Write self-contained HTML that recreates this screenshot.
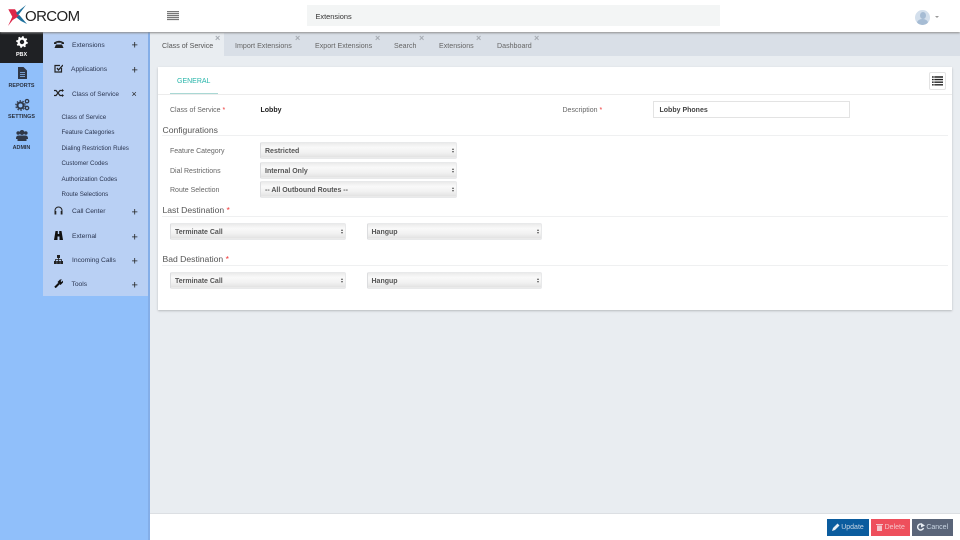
<!DOCTYPE html>
<html><head><meta charset="utf-8">
<style>
*{box-sizing:border-box}
html,body{margin:0;padding:0;width:960px;height:540px;overflow:hidden;background:#e9edf1;font-family:"Liberation Sans",sans-serif;}
.a{position:absolute}
.t{position:absolute;white-space:nowrap;font-size:7px;line-height:10px;color:#333;transform:translateY(1px)}
.n{transform:none}
.m{font-size:6.700px;color:#2a3550}
.s{font-size:6.200px;color:#2a3550}
.p{font-size:11px;color:#222;transform:translate(.5px,1.500px)}
.l{color:#666;font-size:7px}
.h{font-size:8.600px;color:#555;line-height:12px;transform:none}
.b{font-weight:bold}
.r{color:#e33}
.rl{left:0;width:43px;text-align:center;font-size:5.400px;font-weight:bold;color:#2a3240;transform:none}
.tb{color:#666;font-size:7.100px}
.sel{position:absolute;height:17px;border-radius:2px;border:1px solid #e8e9ea;border-left:1px solid #dcdddf;background:linear-gradient(#ebebeb,#f9f9f9 30%,#f1f1f1 65%,#e3e3e3 92%,#efefef);font:bold 7px/17px "Liberation Sans",sans-serif;color:#555;padding-left:4px}
.sel:before,.sel:after{content:"";position:absolute;right:2.500px;border-left:1.500px solid transparent;border-right:1.500px solid transparent}
.sel:before{top:4.500px;border-bottom:2.500px solid #555}
.sel:after{top:8px;border-top:2.500px solid #555}
.line{position:absolute;height:1px;background:#eff0f1}
.x{position:absolute;font:bold 9px/7px "Liberation Sans",sans-serif;color:#a6abb2}
.btn{position:absolute;top:519px;height:17px;color:#c9d6e4;font:7px/17px "Liberation Sans",sans-serif;text-align:center}
</style></head><body>
<!-- top bar -->
<div class="a" style="left:0;top:0;width:960px;height:32px;background:#fff;box-shadow:0 1px 2px #888;z-index:5">
<svg class="a" style="left:0;top:0" width="30" height="30" viewBox="0 0 30 30">
<path d="M8.300 9.300H15L19.300 16L12.700 20L8 26L12.300 16.700Z" fill="#dc2549"/>
<path d="M26 5L16 13L18 15.500Z" fill="#1c6f9c"/>
<path d="M19.300 15L27 24L21 21L16.500 17.500Z" fill="#1c6f9c"/>
</svg>
<span class="t n" style="left:25px;top:8px;font-size:15px;line-height:17px;color:#222;letter-spacing:-.6px">ORCOM</span>
<svg class="a" style="left:167px;top:11px" width="12" height="10"><path d="M0 .5H12M0 2.500H12M0 4.500H12M0 6.500H12M0 8.500H12" stroke="#777" stroke-width="1.200" /></svg>
<div class="a" style="left:307px;top:5px;width:413px;height:21px;background:#f3f5f5"></div>
<span class="t" style="left:315.500px;top:11px;color:#333;font-size:7.400px">Extensions</span>
<div class="a" style="left:915px;top:10px;width:15px;height:15px;border-radius:50%;background:#d3dfec;overflow:hidden">
<div class="a" style="left:4.500px;top:2px;width:6px;height:7px;border-radius:50%;background:#a6bcd4"></div>
<div class="a" style="left:2px;top:9px;width:11px;height:8px;border-radius:50%;background:#a6bcd4"></div></div>
<div class="a" style="left:935px;top:16px;border:2px solid transparent;border-top:2px solid #999"></div>
</div>
<!-- rail -->
<div class="a" style="left:0;top:32px;width:150px;height:508px;background:#90bffa"></div>
<div class="a" style="left:148px;top:32px;width:2px;height:508px;background:#84aee8"></div>
<div class="a" style="left:0;top:32px;width:43px;height:31px;background:#1f2124"></div>
<svg class="a" style="left:16px;top:36px" width="12" height="12" viewBox="0 0 12 12"><circle cx="6" cy="6" r="3.400" fill="none" stroke="#fff" stroke-width="2.400"/><circle cx="6" cy="6" r="5" fill="none" stroke="#fff" stroke-width="1.500" stroke-dasharray="1.900 2"/></svg>
<span class="t rl" style="top:50px;color:#fff">PBX</span>
<svg class="a" style="left:18px;top:67px" width="9" height="12" viewBox="0 0 9 12"><path d="M0 0H5.500L9 3.500V12H0Z" fill="#2f3848"/><path d="M2 5.500H7M2 7.500H7M2 9.500H7" stroke="#90bffa" stroke-width=".7"/></svg>
<span class="t rl" style="top:81px">REPORTS</span>
<svg class="a" style="left:15px;top:98px" width="15" height="14" viewBox="0 0 15 14"><circle cx="5.500" cy="7.500" r="3" fill="none" stroke="#2f3848" stroke-width="2"/><circle cx="5.500" cy="7.500" r="4.700" fill="none" stroke="#2f3848" stroke-width="1.200" stroke-dasharray="1.500 1.500"/><circle cx="12" cy="3.200" r="1.700" fill="none" stroke="#2f3848" stroke-width="1.300"/><circle cx="12" cy="10" r="1.700" fill="none" stroke="#2f3848" stroke-width="1.300"/></svg>
<span class="t rl" style="top:112px">SETTINGS</span>
<svg class="a" style="left:16px;top:130px" width="12" height="11" viewBox="0 0 12 11"><circle cx="2.200" cy="3" r="1.800" fill="#2f3848"/><circle cx="9.800" cy="3" r="1.800" fill="#2f3848"/><circle cx="6" cy="2.500" r="2.500" fill="#2f3848"/><path d="M0 8.500Q0 5.500 2.500 5.500H9.500Q12 5.500 12 8.500V9H10.500V11H1.500V9H0Z" fill="#2f3848"/></svg>
<span class="t rl" style="top:143px">ADMIN</span>
<!-- submenu -->
<div class="a" style="left:43px;top:32px;width:105px;height:264px;background:#b9d0f4"></div>
<svg class="a" style="left:54px;top:40px" width="10" height="8" viewBox="0 0 10 8"><path d="M0 2.500Q5 -1 10 2.500V4H7.500V2.800H2.500V4H0Z M2 4.500H8L9.500 8H.5Z" fill="#222"/></svg>
<span class="t m" style="left:72px;top:40px">Extensions</span><span class="t p" style="left:131px;top:39px">+</span>
<svg class="a" style="left:54px;top:64px" width="9" height="9" viewBox="0 0 9 9"><path d="M6 1.500H1V8H7.500V4" fill="none" stroke="#222" stroke-width="1.200"/><path d="M3 4L4.500 6L9 1" fill="none" stroke="#222" stroke-width="1.300"/></svg>
<span class="t m" style="left:71px;top:64px">Applications</span><span class="t p" style="left:131px;top:64px">+</span>
<svg class="a" style="left:54px;top:89px" width="10" height="8" viewBox="0 0 10 8"><path d="M0 1.500H2L6 6.500H9M0 6.500H2L6 1.500H9" fill="none" stroke="#222" stroke-width="1.200"/><path d="M8 0L10 1.500L8 3ZM8 5L10 6.500L8 8Z" fill="#222"/></svg>
<span class="t m" style="left:72px;top:89px;font-size:6.500px">Class of Service</span><span class="t" style="left:131.500px;top:88px;font-size:9px;color:#222">×</span>
<span class="t s" style="left:61.500px;top:112px">Class of Service</span>
<span class="t s" style="left:61.500px;top:127px">Feature Categories</span>
<span class="t s" style="left:61.500px;top:143px">Dialing Restriction Rules</span>
<span class="t s" style="left:61.500px;top:158px">Customer Codes</span>
<span class="t s" style="left:61.500px;top:174px">Authorization Codes</span>
<span class="t s" style="left:61.500px;top:189px">Route Selections</span>
<svg class="a" style="left:54px;top:206px" width="9" height="9" viewBox="0 0 9 9"><path d="M1 6.500V4.500A3.500 3.500 0 0 1 8 4.500V6.500" fill="none" stroke="#222" stroke-width="1"/><rect x=".5" y="5" width="1.800" height="3.500" fill="#222"/><rect x="6.700" y="5" width="1.800" height="3.500" fill="#222"/></svg>
<span class="t m" style="left:72px;top:206px">Call Center</span><span class="t p" style="left:131px;top:206px">+</span>
<svg class="a" style="left:54px;top:231px" width="9" height="9" viewBox="0 0 9 9"><path d="M1.500 0H3.800V3H5.200V0H7.500L9 9H5.500V5.500H3.500V9H0Z" fill="#111"/></svg>
<span class="t m" style="left:72px;top:231px">External</span><span class="t p" style="left:131px;top:231px">+</span>
<svg class="a" style="left:54px;top:255px" width="9" height="9" viewBox="0 0 9 9"><rect x="3" y="0" width="3" height="3" fill="#222"/><path d="M1.500 6V4.500H7.500V6M4.500 3V6" fill="none" stroke="#222" stroke-width=".8"/><rect x="0" y="6" width="2.800" height="3" fill="#222"/><rect x="3.100" y="6" width="2.800" height="3" fill="#222"/><rect x="6.200" y="6" width="2.800" height="3" fill="#222"/></svg>
<span class="t m" style="left:72px;top:255px">Incoming Calls</span><span class="t p" style="left:131px;top:255px">+</span>
<svg class="a" style="left:54px;top:279px" width="9" height="9" viewBox="0 0 9 9"><path d="M1 8.500L5 4.500" stroke="#111" stroke-width="2"/><path d="M3.500 3L6 0.500H8L6.500 2L7.500 3L9 1.500V3.500L6.500 6Z" fill="#111"/></svg>
<span class="t m" style="left:71.500px;top:279px">Tools</span><span class="t p" style="left:131px;top:279px">+</span>
<!-- tabs -->
<div class="a" style="left:150px;top:33px;width:810px;height:23px;background:#d9dfe7"></div>
<div class="a" style="left:150px;top:33px;width:74px;height:23px;background:#e9edf1"></div>
<span class="t tb" style="left:162px;top:40px;color:#555">Class of Service</span><span class="x" style="left:215px;top:35px">×</span>
<span class="t tb" style="left:235px;top:40px">Import Extensions</span><span class="x" style="left:295px;top:35px">×</span>
<span class="t tb" style="left:315px;top:40px">Export Extensions</span><span class="x" style="left:375px;top:35px">×</span>
<span class="t tb" style="left:394px;top:40px">Search</span><span class="x" style="left:419px;top:35px">×</span>
<span class="t tb" style="left:439px;top:40px">Extensions</span><span class="x" style="left:476px;top:35px">×</span>
<span class="t tb" style="left:497px;top:40px">Dashboard</span><span class="x" style="left:534px;top:35px">×</span>
<!-- card -->
<div class="a" style="left:158px;top:67px;width:794px;height:243px;background:#fff;box-shadow:0 1px 2px #b5b9bd"></div>
<div class="a" style="left:158px;top:94px;width:794px;height:1px;background:#ececec"></div>
<div class="a" style="left:170px;top:93px;width:48px;height:1px;background:#a9d8d4"></div>
<span class="t" style="left:177px;top:76px;color:#27b5aa;font-size:7px">GENERAL</span>
<div class="a" style="left:929px;top:72px;width:17px;height:18px;border:1px solid #e3e3e3;border-radius:2px;background:#fff"></div>
<svg class="a" style="left:932px;top:76px" width="11" height="10"><path d="M0 1H11M0 3.600H11M0 6.200H11M0 8.800H11" stroke="#222" stroke-width="1.400"/><path d="M2 0V10" stroke="#fff" stroke-width=".6"/></svg>
<span class="t l" style="left:170px;top:105px">Class of Service <span class="r">*</span></span>
<span class="t b" style="left:260.500px;top:105px;color:#222">Lobby</span>
<span class="t l" style="left:562.500px;top:105px">Description <span class="r">*</span></span>
<div class="a" style="left:653px;top:101px;width:197px;height:17px;border:1px solid #e3e3e3;background:#fff"></div>
<span class="t b" style="left:659.500px;top:105px;color:#444">Lobby Phones</span>
<span class="t h" style="left:162.500px;top:124px">Configurations</span>
<div class="line" style="left:162px;top:135px;width:786px"></div>
<span class="t l" style="left:170px;top:146px">Feature Category</span>
<div class="sel" style="left:260px;top:142px;width:197px">Restricted</div>
<span class="t l" style="left:170px;top:166px">Dial Restrictions</span>
<div class="sel" style="left:260px;top:162px;width:197px">Internal Only</div>
<span class="t l" style="left:170px;top:185px">Route Selection</span>
<div class="sel" style="left:260px;top:181px;width:197px">-- All Outbound Routes --</div>
<span class="t h" style="left:162.500px;top:204px">Last Destination <span class="r">*</span></span>
<div class="line" style="left:162px;top:216px;width:786px"></div>
<div class="sel" style="left:170px;top:223px;width:176px">Terminate Call</div>
<div class="sel" style="left:366.500px;top:223px;width:175.500px">Hangup</div>
<span class="t h" style="left:162.500px;top:253px">Bad Destination <span class="r">*</span></span>
<div class="line" style="left:162px;top:265px;width:786px"></div>
<div class="sel" style="left:170px;top:272px;width:176px">Terminate Call</div>
<div class="sel" style="left:366.500px;top:272px;width:175.500px">Hangup</div>
<!-- footer -->
<div class="a" style="left:150px;top:513px;width:810px;height:27px;background:#fff;border-top:1px solid #dcdfe3"></div>
<div class="btn" style="left:827px;width:42px;background:#0b5c9e;padding-left:9px">Update</div>
<svg class="a" style="left:832px;top:523px" width="8" height="8"><path d="M0 8L1 5L5.500 .5L7.500 2.500L3 7Z" fill="#e8eef4"/></svg>
<div class="btn" style="left:870.500px;width:39.500px;background:#ee4f5c;padding-left:9px;color:#f4c6cb">Delete</div>
<svg class="a" style="left:876px;top:523px" width="7" height="8"><path d="M0 1H7V2H0ZM1 2.500H6V8H1Z" fill="#f4c6cb"/></svg>
<div class="btn" style="left:911.500px;width:41.500px;background:#5a6579;padding-left:10px">Cancel</div>
<svg class="a" style="left:917px;top:523px" width="8" height="8"><path d="M6.500 5A3 3 0 1 1 5 1.300" fill="none" stroke="#e8eef4" stroke-width="1.500"/><path d="M4 0L8 2.500L4 4.500Z" fill="#e8eef4"/></svg>
</body></html>
